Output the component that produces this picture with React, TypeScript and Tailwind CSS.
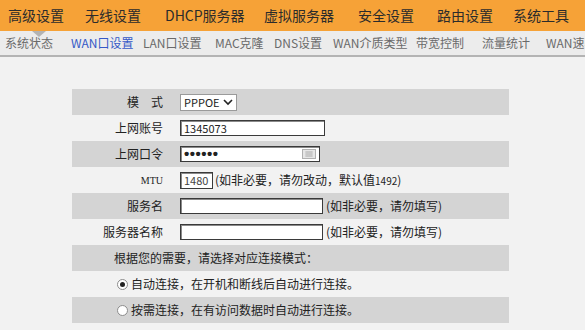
import React from 'react';

const topMenu = [
  { label: '高级设置', w: 'w-[77px]' },
  { label: '无线设置', w: 'w-[80px]' },
  { label: 'DHCP服务器', w: 'w-[99px]' },
  { label: '虚拟服务器', w: 'w-[94px]' },
  { label: '安全设置', w: 'w-[79px]' },
  { label: '路由设置', w: 'w-[76px]' },
  { label: '系统工具', w: 'w-[72px]' },
];

const subMenu = [
  { label: '系统状态', w: 'w-[66px]' },
  { label: 'WAN口设置', w: 'w-[72px]', active: true },
  { label: 'LAN口设置', w: 'w-[72px]' },
  { label: 'MAC克隆', w: 'w-[59px]' },
  { label: 'DNS设置', w: 'w-[59px]' },
  { label: 'WAN介质类型', w: 'w-[83px]' },
  { label: '带宽控制', w: 'w-[66px]' },
  { label: '流量统计', w: 'w-[64px]' },
  { label: 'WAN速率', w: 'w-[60px]' },
];

const font = 'font-["Noto_Sans_CJK_SC",sans-serif]';
const inputCls = 'h-[16px] bg-white border border-[#3a3a3a] shadow-[inset_1px_1px_0_#8a8a8a] text-[11px] leading-[14px] px-[3px] text-[#222]';

function Row({ gray, label, small, children }: { gray: boolean; label?: string; small?: boolean; children: React.ReactNode }) {
  return (
    <div className={`flex items-center h-[26px] ${gray ? 'bg-[#d4d4d4]' : ''}`}>
      {label !== undefined && (
        <div className={`w-[93px] text-right pr-[2px] text-[#222] shrink-0 ${small ? 'text-[10px] font-["Liberation_Serif",serif]' : 'text-[12px]'}`}>{label}</div>
      )}
      <div className={`flex items-center ${label !== undefined ? 'pl-[15px]' : ''}`}>{children}</div>
    </div>
  );
}

function Radio({ checked }: { checked?: boolean }) {
  return (
    <span className="w-[11px] h-[11px] rounded-full border border-[#8c8c8c] bg-white flex items-center justify-center shrink-0">
      {checked && <span className="w-[5px] h-[5px] rounded-full bg-[#222]" />}
    </span>
  );
}

function App() {
  return (
    <div className={`w-[585px] h-[330px] overflow-hidden bg-[#f2f2f2] ${font}`}>
      <div className="flex items-center h-[31px] bg-[#f6a237] pl-[8px] text-[14px] text-[#2b2b2b] whitespace-nowrap">
        {topMenu.map((m) => (
          <div key={m.label} className={`${m.w} shrink-0`}>{m.label}</div>
        ))}
      </div>

      <div className="relative flex items-center h-[26px] bg-[#ececec] border-b-2 border-[#b4b4b4] pl-[5px] text-[12px] text-[#6a6a6a] whitespace-nowrap overflow-hidden">
        <span className="absolute left-[32px] top-0 w-0 h-0 border-l-[7px] border-r-[7px] border-t-[6px] border-l-transparent border-r-transparent border-t-[#b3b3b3]" />
        {subMenu.map((m) => (
          <div key={m.label} className={`${m.w} shrink-0 ${m.active ? 'text-[#3559c7]' : ''}`}>{m.label}</div>
        ))}
      </div>

      <div className="pt-[32px] pl-[72px]">
        <div className="w-[437px]">
          <Row gray label="模　式">
            <div className="w-[57px] h-[17px] bg-white border border-[#9a9a9a] flex items-center justify-between px-[3px] text-[11px] text-[#222]">
              <span>PPPOE</span>
              <svg width="10" height="7" viewBox="0 0 10 7"><path d="M1 1l4 4 4-4" stroke="#222" strokeWidth="1.6" fill="none" /></svg>
            </div>
          </Row>
          <Row gray={false} label="上网账号">
            <div className={`${inputCls} w-[145px]`}>1345073</div>
          </Row>
          <Row gray label="上网口令">
            <div className={`${inputCls} w-[140px] flex items-center justify-between`}>
              <span className="text-[15px] font-bold tracking-[0.5px] leading-[14px] font-['Liberation_Sans',sans-serif]">••••••</span>
              <svg width="14" height="10" viewBox="0 0 14 10">
                <rect x="0.5" y="0.5" width="13" height="9" fill="#e6e6e6" stroke="#b0b0b0" />
                <path d="M3 3h8M3 5h8M3 7h8M5 2v6M7 2v6M9 2v6" stroke="#b8b8b8" strokeWidth="0.8" />
              </svg>
            </div>
          </Row>
          <Row gray={false} label="MTU" small>
            <div className={`${inputCls} w-[33px] h-[17px] text-[#444]`}>1480</div>
            <span className="ml-[2px] text-[12px] text-[#222]">(如非必要，请勿改动，默认值<span className="text-[10px]">1492</span>)</span>
          </Row>
          <Row gray label="服务名">
            <div className={`${inputCls} w-[143px]`} />
            <span className="ml-[3px] text-[12px] text-[#222]">(如非必要，请勿填写)</span>
          </Row>
          <Row gray={false} label="服务器名称">
            <div className={`${inputCls} w-[143px]`} />
            <span className="ml-[3px] text-[12px] text-[#222]">(如非必要，请勿填写)</span>
          </Row>
          <Row gray>
            <span className="pl-[42px] text-[12px] text-[#222]">根据您的需要，请选择对应连接模式：</span>
          </Row>
          <Row gray={false}>
            <div className="pl-[45px] flex items-center gap-[3px] text-[12px] text-[#222]">
              <Radio checked />
              <span>自动连接，在开机和断线后自动进行连接。</span>
            </div>
          </Row>
          <Row gray>
            <div className="pl-[45px] flex items-center gap-[3px] text-[12px] text-[#222]">
              <Radio />
              <span>按需连接，在有访问数据时自动进行连接。</span>
            </div>
          </Row>
          <Row gray={false}>
            <span />
          </Row>
        </div>
      </div>
    </div>
  );
}

export default App;
